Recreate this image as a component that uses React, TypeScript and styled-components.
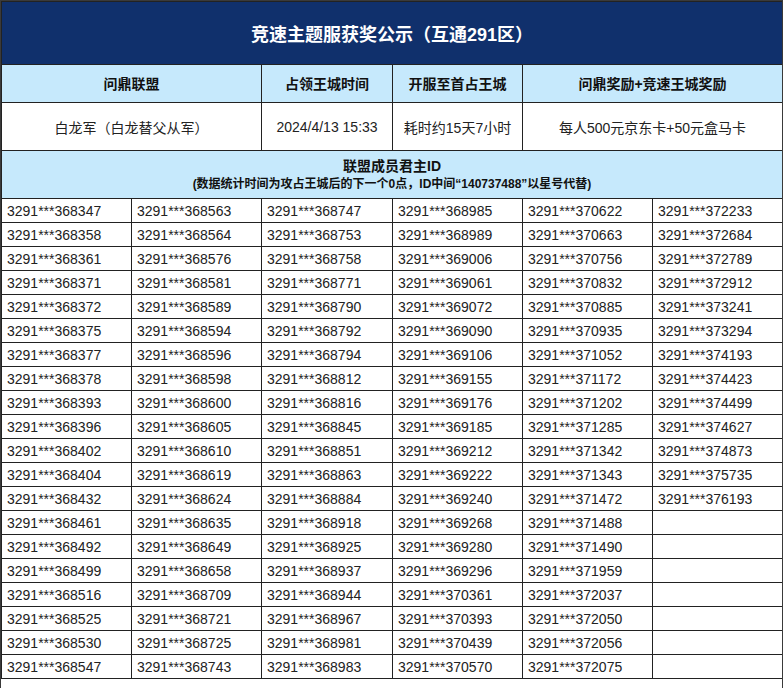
import React from 'react';
import styled, { createGlobalStyle } from 'styled-components';

const Global = createGlobalStyle`
  html, body { margin: 0; background: #fff; }
  body { font-family: "Liberation Sans", Arial, "Noto Sans CJK SC", sans-serif; }
`;

const Frame = styled.div`
  width: 783px;
  height: 688px;
  overflow: hidden;
  box-sizing: border-box;
  border: 1px solid #3a3a3a;
  border-bottom: none;
`;

const Table = styled.table`
  width: 781px;
  border-collapse: collapse;
  table-layout: fixed;
  color: #111;
`;

const Title = styled.td`
  background: #10306c;
  color: #fff;
  height: 62px;
  padding: 0;
  text-align: center;
  font-size: 18px;
  font-weight: bold;
  border: 1px solid #222;
`;

const Head = styled.td<{ $tall?: boolean }>`
  background: #c6e9fc;
  height: ${(p) => (p.$tall ? '47px' : '37px')};
  padding: 0;
  text-align: center;
  font-size: 14px;
  font-weight: bold;
  border: 1px solid #222;
  line-height: 18px;
`;

const Small = styled.div`
  font-size: 12px;
`;

const Cell = styled.td<{ $id?: boolean }>`
  height: ${(p) => (p.$id ? '23px' : '47px')};
  text-align: ${(p) => (p.$id ? 'left' : 'center')};
  padding: ${(p) => (p.$id ? '0 0 0 5px' : '0')};
  font-size: 14px;
  border: 1px solid #222;
  color: #222;
  white-space: nowrap;
  overflow: hidden;
`;

const cols = [
  '368347 368358 368361 368371 368372 368375 368377 368378 368393 368396 368402 368404 368432 368461 368492 368499 368516 368525 368530 368547',
  '368563 368564 368576 368581 368589 368594 368596 368598 368600 368605 368610 368619 368624 368635 368649 368658 368709 368721 368725 368743',
  '368747 368753 368758 368771 368790 368792 368794 368812 368816 368845 368851 368863 368884 368918 368925 368937 368944 368967 368981 368983',
  '368985 368989 369006 369061 369072 369090 369106 369155 369176 369185 369212 369222 369240 369268 369280 369296 370361 370393 370439 370570',
  '370622 370663 370756 370832 370885 370935 371052 371172 371202 371285 371342 371343 371472 371488 371490 371959 372037 372050 372056 372075',
  '372233 372684 372789 372912 373241 373294 374193 374423 374499 374627 374873 375735 376193',
].map((s) => s.split(' '));

export default function App() {
  const rows = Array.from({ length: 20 }, (_, r) => r);
  return (
    <Frame>
      <Global />
      <Table>
        <colgroup>
          {[130, 130, 131, 130, 130, 130].map((w, i) => (
            <col key={i} style={{ width: w }} />
          ))}
        </colgroup>
        <tbody>
          <tr>
            <Title colSpan={6}>竞速主题服获奖公示（互通291区）</Title>
          </tr>
          <tr>
            <Head colSpan={2}>问鼎联盟</Head>
            <Head>占领王城时间</Head>
            <Head>开服至首占王城</Head>
            <Head colSpan={2}>问鼎奖励+竞速王城奖励</Head>
          </tr>
          <tr>
            <Cell colSpan={2}>白龙军（白龙替父从军）</Cell>
            <Cell>2024/4/13 15:33</Cell>
            <Cell>耗时约15天7小时</Cell>
            <Cell colSpan={2}>每人500元京东卡+50元盒马卡</Cell>
          </tr>
          <tr>
            <Head colSpan={6} $tall>
              联盟成员君主ID
              <Small>(数据统计时间为攻占王城后的下一个0点，ID中间“140737488”以星号代替)</Small>
            </Head>
          </tr>
          {rows.map((r) => (
            <tr key={r}>
              {cols.map((c, i) => (
                <Cell key={i} $id>{c[r] ? `3291***${c[r]}` : ''}</Cell>
              ))}
            </tr>
          ))}
        </tbody>
      </Table>
    </Frame>
  );
}
